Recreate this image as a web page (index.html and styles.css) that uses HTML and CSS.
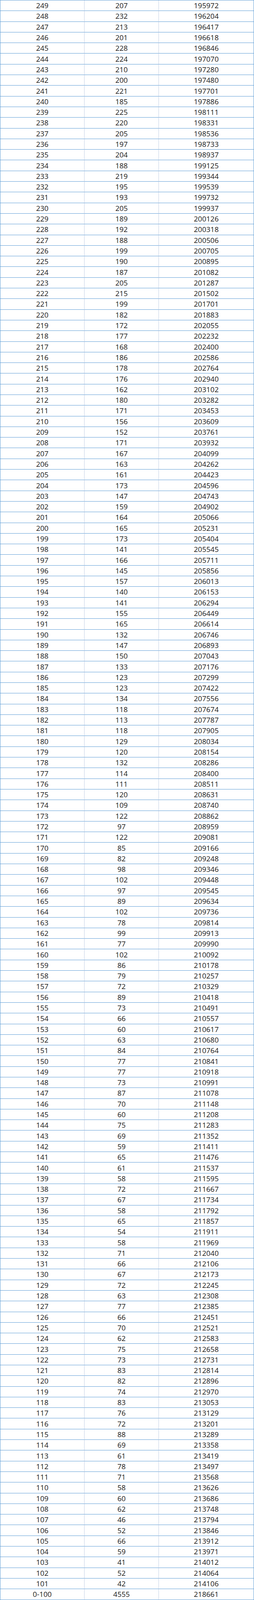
FILE: index.html
```html
<!DOCTYPE html>
<html lang="zh">
<head>
<meta charset="utf-8">
<title>分数段统计</title>
<link rel="stylesheet" href="styles.css">
</head>
<body>
<table class="score-table">
<colgroup><col class="c1"><col class="c2"><col class="c3"></colgroup>
<tbody>
<tr><td>249</td><td>207</td><td>195972</td></tr>
<tr><td>248</td><td>232</td><td>196204</td></tr>
<tr><td>247</td><td>213</td><td>196417</td></tr>
<tr><td>246</td><td>201</td><td>196618</td></tr>
<tr><td>245</td><td>228</td><td>196846</td></tr>
<tr><td>244</td><td>224</td><td>197070</td></tr>
<tr><td>243</td><td>210</td><td>197280</td></tr>
<tr><td>242</td><td>200</td><td>197480</td></tr>
<tr><td>241</td><td>221</td><td>197701</td></tr>
<tr><td>240</td><td>185</td><td>197886</td></tr>
<tr><td>239</td><td>225</td><td>198111</td></tr>
<tr><td>238</td><td>220</td><td>198331</td></tr>
<tr><td>237</td><td>205</td><td>198536</td></tr>
<tr><td>236</td><td>197</td><td>198733</td></tr>
<tr><td>235</td><td>204</td><td>198937</td></tr>
<tr><td>234</td><td>188</td><td>199125</td></tr>
<tr><td>233</td><td>219</td><td>199344</td></tr>
<tr><td>232</td><td>195</td><td>199539</td></tr>
<tr><td>231</td><td>193</td><td>199732</td></tr>
<tr><td>230</td><td>205</td><td>199937</td></tr>
<tr><td>229</td><td>189</td><td>200126</td></tr>
<tr><td>228</td><td>192</td><td>200318</td></tr>
<tr><td>227</td><td>188</td><td>200506</td></tr>
<tr><td>226</td><td>199</td><td>200705</td></tr>
<tr><td>225</td><td>190</td><td>200895</td></tr>
<tr><td>224</td><td>187</td><td>201082</td></tr>
<tr><td>223</td><td>205</td><td>201287</td></tr>
<tr><td>222</td><td>215</td><td>201502</td></tr>
<tr><td>221</td><td>199</td><td>201701</td></tr>
<tr><td>220</td><td>182</td><td>201883</td></tr>
<tr><td>219</td><td>172</td><td>202055</td></tr>
<tr><td>218</td><td>177</td><td>202232</td></tr>
<tr><td>217</td><td>168</td><td>202400</td></tr>
<tr><td>216</td><td>186</td><td>202586</td></tr>
<tr><td>215</td><td>178</td><td>202764</td></tr>
<tr><td>214</td><td>176</td><td>202940</td></tr>
<tr><td>213</td><td>162</td><td>203102</td></tr>
<tr><td>212</td><td>180</td><td>203282</td></tr>
<tr><td>211</td><td>171</td><td>203453</td></tr>
<tr><td>210</td><td>156</td><td>203609</td></tr>
<tr><td>209</td><td>152</td><td>203761</td></tr>
<tr><td>208</td><td>171</td><td>203932</td></tr>
<tr><td>207</td><td>167</td><td>204099</td></tr>
<tr><td>206</td><td>163</td><td>204262</td></tr>
<tr><td>205</td><td>161</td><td>204423</td></tr>
<tr><td>204</td><td>173</td><td>204596</td></tr>
<tr><td>203</td><td>147</td><td>204743</td></tr>
<tr><td>202</td><td>159</td><td>204902</td></tr>
<tr><td>201</td><td>164</td><td>205066</td></tr>
<tr><td>200</td><td>165</td><td>205231</td></tr>
<tr><td>199</td><td>173</td><td>205404</td></tr>
<tr><td>198</td><td>141</td><td>205545</td></tr>
<tr><td>197</td><td>166</td><td>205711</td></tr>
<tr><td>196</td><td>145</td><td>205856</td></tr>
<tr><td>195</td><td>157</td><td>206013</td></tr>
<tr><td>194</td><td>140</td><td>206153</td></tr>
<tr><td>193</td><td>141</td><td>206294</td></tr>
<tr><td>192</td><td>155</td><td>206449</td></tr>
<tr><td>191</td><td>165</td><td>206614</td></tr>
<tr><td>190</td><td>132</td><td>206746</td></tr>
<tr><td>189</td><td>147</td><td>206893</td></tr>
<tr><td>188</td><td>150</td><td>207043</td></tr>
<tr><td>187</td><td>133</td><td>207176</td></tr>
<tr><td>186</td><td>123</td><td>207299</td></tr>
<tr><td>185</td><td>123</td><td>207422</td></tr>
<tr><td>184</td><td>134</td><td>207556</td></tr>
<tr><td>183</td><td>118</td><td>207674</td></tr>
<tr><td>182</td><td>113</td><td>207787</td></tr>
<tr><td>181</td><td>118</td><td>207905</td></tr>
<tr><td>180</td><td>129</td><td>208034</td></tr>
<tr><td>179</td><td>120</td><td>208154</td></tr>
<tr><td>178</td><td>132</td><td>208286</td></tr>
<tr><td>177</td><td>114</td><td>208400</td></tr>
<tr><td>176</td><td>111</td><td>208511</td></tr>
<tr><td>175</td><td>120</td><td>208631</td></tr>
<tr><td>174</td><td>109</td><td>208740</td></tr>
<tr><td>173</td><td>122</td><td>208862</td></tr>
<tr><td>172</td><td>97</td><td>208959</td></tr>
<tr><td>171</td><td>122</td><td>209081</td></tr>
<tr><td>170</td><td>85</td><td>209166</td></tr>
<tr><td>169</td><td>82</td><td>209248</td></tr>
<tr><td>168</td><td>98</td><td>209346</td></tr>
<tr><td>167</td><td>102</td><td>209448</td></tr>
<tr><td>166</td><td>97</td><td>209545</td></tr>
<tr><td>165</td><td>89</td><td>209634</td></tr>
<tr><td>164</td><td>102</td><td>209736</td></tr>
<tr><td>163</td><td>78</td><td>209814</td></tr>
<tr><td>162</td><td>99</td><td>209913</td></tr>
<tr><td>161</td><td>77</td><td>209990</td></tr>
<tr><td>160</td><td>102</td><td>210092</td></tr>
<tr><td>159</td><td>86</td><td>210178</td></tr>
<tr><td>158</td><td>79</td><td>210257</td></tr>
<tr><td>157</td><td>72</td><td>210329</td></tr>
<tr><td>156</td><td>89</td><td>210418</td></tr>
<tr><td>155</td><td>73</td><td>210491</td></tr>
<tr><td>154</td><td>66</td><td>210557</td></tr>
<tr><td>153</td><td>60</td><td>210617</td></tr>
<tr><td>152</td><td>63</td><td>210680</td></tr>
<tr><td>151</td><td>84</td><td>210764</td></tr>
<tr><td>150</td><td>77</td><td>210841</td></tr>
<tr><td>149</td><td>77</td><td>210918</td></tr>
<tr><td>148</td><td>73</td><td>210991</td></tr>
<tr><td>147</td><td>87</td><td>211078</td></tr>
<tr><td>146</td><td>70</td><td>211148</td></tr>
<tr><td>145</td><td>60</td><td>211208</td></tr>
<tr><td>144</td><td>75</td><td>211283</td></tr>
<tr><td>143</td><td>69</td><td>211352</td></tr>
<tr><td>142</td><td>59</td><td>211411</td></tr>
<tr><td>141</td><td>65</td><td>211476</td></tr>
<tr><td>140</td><td>61</td><td>211537</td></tr>
<tr><td>139</td><td>58</td><td>211595</td></tr>
<tr><td>138</td><td>72</td><td>211667</td></tr>
<tr><td>137</td><td>67</td><td>211734</td></tr>
<tr><td>136</td><td>58</td><td>211792</td></tr>
<tr><td>135</td><td>65</td><td>211857</td></tr>
<tr><td>134</td><td>54</td><td>211911</td></tr>
<tr><td>133</td><td>58</td><td>211969</td></tr>
<tr><td>132</td><td>71</td><td>212040</td></tr>
<tr><td>131</td><td>66</td><td>212106</td></tr>
<tr><td>130</td><td>67</td><td>212173</td></tr>
<tr><td>129</td><td>72</td><td>212245</td></tr>
<tr><td>128</td><td>63</td><td>212308</td></tr>
<tr><td>127</td><td>77</td><td>212385</td></tr>
<tr><td>126</td><td>66</td><td>212451</td></tr>
<tr><td>125</td><td>70</td><td>212521</td></tr>
<tr><td>124</td><td>62</td><td>212583</td></tr>
<tr><td>123</td><td>75</td><td>212658</td></tr>
<tr><td>122</td><td>73</td><td>212731</td></tr>
<tr><td>121</td><td>83</td><td>212814</td></tr>
<tr><td>120</td><td>82</td><td>212896</td></tr>
<tr><td>119</td><td>74</td><td>212970</td></tr>
<tr><td>118</td><td>83</td><td>213053</td></tr>
<tr><td>117</td><td>76</td><td>213129</td></tr>
<tr><td>116</td><td>72</td><td>213201</td></tr>
<tr><td>115</td><td>88</td><td>213289</td></tr>
<tr><td>114</td><td>69</td><td>213358</td></tr>
<tr><td>113</td><td>61</td><td>213419</td></tr>
<tr><td>112</td><td>78</td><td>213497</td></tr>
<tr><td>111</td><td>71</td><td>213568</td></tr>
<tr><td>110</td><td>58</td><td>213626</td></tr>
<tr><td>109</td><td>60</td><td>213686</td></tr>
<tr><td>108</td><td>62</td><td>213748</td></tr>
<tr><td>107</td><td>46</td><td>213794</td></tr>
<tr><td>106</td><td>52</td><td>213846</td></tr>
<tr><td>105</td><td>66</td><td>213912</td></tr>
<tr><td>104</td><td>59</td><td>213971</td></tr>
<tr><td>103</td><td>41</td><td>214012</td></tr>
<tr><td>102</td><td>52</td><td>214064</td></tr>
<tr><td>101</td><td>42</td><td>214106</td></tr>
<tr><td>0-100</td><td>4555</td><td>218661</td></tr>
</tbody>
</table>
</body>
</html>
```
FILE: styles.css
```css
html, body {
  margin: 0;
  padding: 0;
  background: #ffffff;
}

/* The photographed window is 4096px tall; 150 rows share it evenly. */
.score-table {
  width: 649px;
  border-collapse: separate;
  border-spacing: 0;
  table-layout: fixed;
  border-top: 1px solid #5b9bd5;
  border-left: 1px solid #5b9bd5;
  font-family: "Open Sans", "Noto Sans", "Noto Sans CJK SC", sans-serif;
  font-size: 18.5px;
  color: #1c1c1c;
}

.score-table .c1 { width: 215px; }
.score-table .c2 { width: 190px; }
.score-table .c3 { width: 243px; }

.score-table td {
  box-sizing: border-box;
  height: 27.3px;
  padding: 0;
  line-height: 26px;
  text-align: center;
  vertical-align: middle;
  border-bottom: 1px solid #5b9bd5;
  border-right: 1px solid #c2d0e4;
  overflow: hidden;
  white-space: nowrap;
}

.score-table td:last-child {
  border-right-color: #5b9bd5;
}
```
